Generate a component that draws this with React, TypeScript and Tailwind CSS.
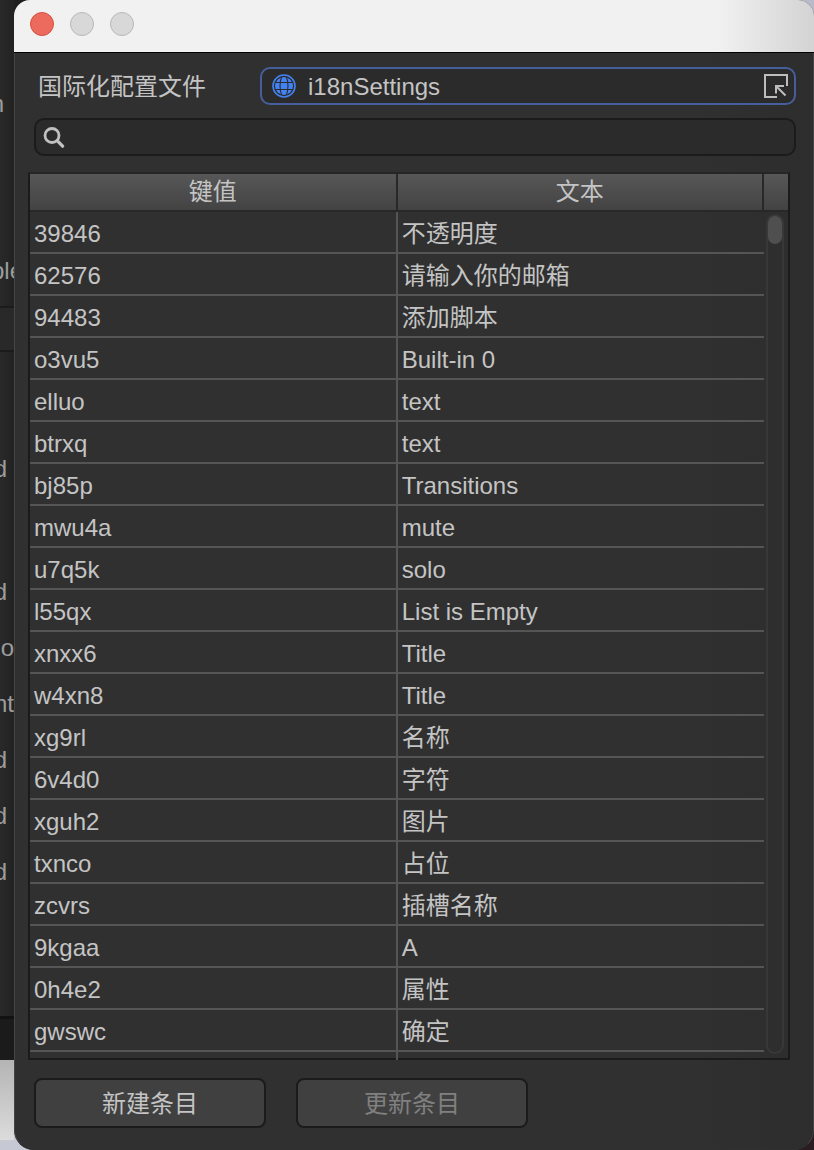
import { useState } from "react";

type Entry = {
	key: string;
	text: string;
};

const entries: Entry[] = [
	{ key: "39846", text: "不透明度" },
	{ key: "62576", text: "请输入你的邮箱" },
	{ key: "94483", text: "添加脚本" },
	{ key: "o3vu5", text: "Built-in 0" },
	{ key: "elluo", text: "text" },
	{ key: "btrxq", text: "text" },
	{ key: "bj85p", text: "Transitions" },
	{ key: "mwu4a", text: "mute" },
	{ key: "u7q5k", text: "solo" },
	{ key: "l55qx", text: "List is Empty" },
	{ key: "xnxx6", text: "Title" },
	{ key: "w4xn8", text: "Title" },
	{ key: "xg9rl", text: "名称" },
	{ key: "6v4d0", text: "字符" },
	{ key: "xguh2", text: "图片" },
	{ key: "txnco", text: "占位" },
	{ key: "zcvrs", text: "插槽名称" },
	{ key: "9kgaa", text: "A" },
	{ key: "0h4e2", text: "属性" },
	{ key: "gwswc", text: "确定" },
];

function GlobeIcon() {
	return (
		<svg className="h-6 w-6 shrink-0" viewBox="0 0 24 24" fill="none" aria-hidden="true">
			<circle cx="12" cy="12" r="9" fill="#4482f3" />
			<path
				d="M3 8.5h18M3 15.5h18M9.8 2.5C7.4 8 7.4 16 9.8 21.5M14.2 2.5c2.4 5.5 2.4 13.5 0 19"
				stroke="#2b2b2b"
				strokeWidth="1.1"
			/>
			<circle cx="12" cy="12" r="11" stroke="#4482f3" strokeWidth="1.6" />
		</svg>
	);
}

function PickerIcon() {
	return (
		<svg className="h-6 w-6" viewBox="0 0 24 24" fill="none" stroke="#bdbdbd" strokeWidth="2" aria-hidden="true">
			<path d="M13 23H1V1h22v11" />
			<path d="M12 19.5V12h8M12.5 12.5l9 9" />
		</svg>
	);
}

function SearchIcon() {
	return (
		<svg className="h-6 w-6 shrink-0" viewBox="0 0 24 24" fill="none" stroke="#c0c0c0" aria-hidden="true">
			<circle cx="10" cy="10.5" r="7" strokeWidth="2.8" />
			<path d="M15.4 15.9l5.2 5.2" strokeWidth="3.4" strokeLinecap="round" />
		</svg>
	);
}

// Sliver of the editor that shows behind the window
function EditorEdge() {
	return (
		<aside className="flex w-3.5 shrink-0 flex-col overflow-hidden leading-[56px] text-[#9c9c9c]">
			<div className="flex flex-1 flex-col bg-linear-to-r from-[#292929] to-[#222222] pt-[76px]">
				<div className="flex h-14 justify-end pr-2.5">n</div>
				<div className="mt-[111px] flex h-14 justify-center">ple</div>
				<div className="mt-[7px] h-[46px] shrink-0 border-y-2 border-[#1b1b1b] bg-[#292929]" />
				<div className="mt-[89px] flex h-14 justify-end pr-[7px]">d</div>
				<div className="mt-[67px] flex h-14 justify-end pr-[7px]">d</div>
				<div className="flex h-14 justify-end">o</div>
				<div className="flex h-14 justify-end">nt</div>
				<div className="flex h-14 justify-end pr-[7px]">d</div>
				<div className="flex h-14 justify-end pr-[7px]">d</div>
				<div className="flex h-14 justify-end pr-[7px]">d</div>
			</div>
			<div className="h-11 border-t-3 border-[#121212] bg-[#1b1b1b]" />
			<div className="h-20 bg-linear-to-b from-[#b4b4b4] to-[#dcdcdc]" />
			<div className="h-2.5 bg-[#c6c8d4]" />
		</aside>
	);
}

function EntryTable({ items }: { items: Entry[] }) {
	const thClassName =
		"h-[38px] border-r-2 border-b-2 border-[#282828] bg-linear-to-b from-[#575757] to-[#434343] p-0 text-center font-normal leading-9";
	const tdClassName = "h-[42px] border-b-2 border-[#555555] px-1 pt-1 pb-0 leading-9";

	return (
		<div className="mt-4 flex border-2 border-[#1b1b1b] border-t-[#262626]">
			<table className="-mb-0.5 flex-1 table-fixed border-separate border-spacing-0">
				<thead>
					<tr>
						<th className={`${thClassName} w-[50.1%]`}>键值</th>
						<th className={thClassName}>文本</th>
					</tr>
				</thead>
				<tbody>
					{items.map((item) => (
						<tr key={item.key}>
							<td className={`${tdClassName} border-r-2`}>{item.key}</td>
							<td className={tdClassName}>{item.text}</td>
						</tr>
					))}
					<tr>
						<td className="h-2 border-r-2 border-[#555555] p-0" />
						<td className="h-2 p-0" />
					</tr>
				</tbody>
			</table>
			<div className="flex w-6 shrink-0 flex-col">
				<div className="h-[38px] border-b-2 border-[#282828] bg-linear-to-b from-[#575757] to-[#434343]" />
				<div className="mx-0.5 mt-0.5 mb-1 w-[18px] flex-1 rounded-full border-2 border-[#383838]">
					<div className="h-7 rounded-full bg-[#4f4f4f]" />
				</div>
			</div>
		</div>
	);
}

export default function App() {
	const [search, setSearch] = useState("");

	const keyword = search.trim().toLowerCase();
	const visible = entries.filter(
		(entry) => entry.key.includes(keyword) || entry.text.toLowerCase().includes(keyword)
	);

	const buttonClassName =
		"h-[50px] w-[232px] rounded-lg border-2 border-[#1b1b1b] bg-[#404040] pt-0.5 disabled:text-[#808080]";

	return (
		<div className="flex min-h-screen bg-[#262626] font-['Liberation_Sans','Noto_Sans_CJK_SC',sans-serif] text-2xl text-[#c4c4c4]">
			<EditorEdge />
			<div className="flex min-w-0 flex-1 bg-[conic-gradient(#b8bac8_25%,#2a1c20_0_50%,#c6c8d4_0_75%,#1e1e1e_0)]">
				<main className="flex min-w-0 flex-1 flex-col overflow-hidden rounded-t-2xl rounded-b-[20px] bg-[#303030]">
					<header className="flex h-[53px] items-center gap-4 border-b border-black bg-[linear-gradient(to_right,#f1f1f1_88%,#d3d3d3)] px-4 pb-1">
						<button type="button" aria-label="关闭" className="h-6 w-6 rounded-full border border-[#d2513f] bg-[#ed6a5e]" />
						<button type="button" aria-label="最小化" className="h-6 w-6 rounded-full border border-[#b8b8b8] bg-[#d8d8d8]" />
						<button type="button" aria-label="缩放" className="h-6 w-6 rounded-full border border-[#b8b8b8] bg-[#d8d8d8]" />
					</header>

					<div className="flex-1 rounded-b-[20px] border-x border-b border-[#454545] border-b-[#303030] bg-[linear-gradient(to_right,#303030_86%,#2d2d2d)] pt-3.5 pr-[23px] pb-5 pl-[13px]">
						<div className="mr-[-6px] ml-1.5 flex items-center">
							<label htmlFor="settings" className="w-[226px] shrink-0 pt-0.5 pl-1 leading-9">
								国际化配置文件
							</label>
							<div className="flex h-[38px] min-w-0 flex-1 items-center gap-3 rounded-[10px] border-2 border-[#465e9c] bg-[#2b2b2b] pr-1.5 pl-2.5">
								<GlobeIcon />
								<input
									id="settings"
									type="text"
									readOnly
									defaultValue="i18nSettings"
									className="h-8 min-w-0 flex-1 bg-transparent pt-0.5 outline-none"
								/>
								<button type="button" aria-label="选择文件">
									<PickerIcon />
								</button>
							</div>
						</div>

						<div className="mt-[13px] mr-[-6px] ml-1.5 flex h-[38px] items-center rounded-[10px] border-2 border-[#1b1b1b] bg-[#2b2b2b] px-1.5">
							<SearchIcon />
							<input
								type="search"
								aria-label="搜索"
								value={search}
								onChange={(event) => setSearch(event.target.value)}
								className="h-8 min-w-0 flex-1 bg-transparent pl-2 outline-none"
							/>
						</div>

						<EntryTable items={visible} />

						<div className="mt-[18px] ml-1.5 flex gap-[30px]">
							<button type="button" className={buttonClassName}>
								新建条目
							</button>
							<button type="button" disabled className={buttonClassName}>
								更新条目
							</button>
						</div>
					</div>
				</main>
			</div>
		</div>
	);
}
